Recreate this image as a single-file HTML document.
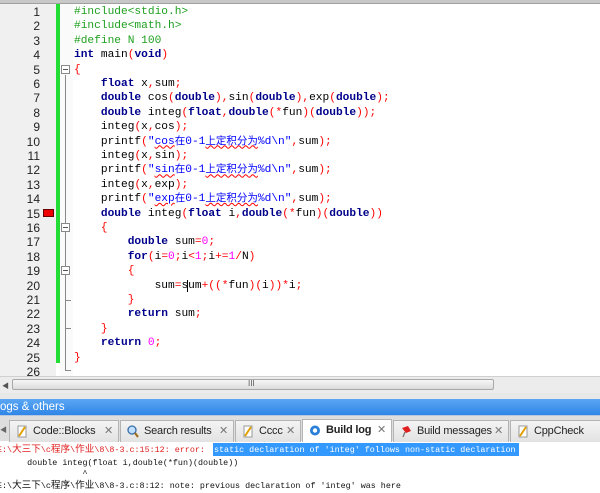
<!DOCTYPE html>
<html><head><meta charset="utf-8"><style>
*{margin:0;padding:0;box-sizing:border-box}
body{width:600px;height:493px;overflow:hidden;background:#fff;position:relative;font-family:"Liberation Sans","Noto Sans CJK SC",sans-serif}
.top{position:absolute;left:0;top:0;width:600px;height:4px;background:#c8c8c8;border-bottom:1px solid #a0a0a0}
.gut{position:absolute;left:0;top:4px;width:56px;height:372px;background:#f0f0f0}
.green{position:absolute;left:56px;top:4px;width:4px;height:359px;background:#22dd33}
.foldcol{position:absolute;left:60px;top:4px;width:13px;height:372px;background:#fafafa}
.ln{position:absolute;left:0;width:40px;text-align:right;font:12px "Liberation Sans",sans-serif;color:#222;height:14.4px;line-height:14.4px}
.code{position:absolute;left:74px;white-space:pre;font:11.2px "Liberation Mono","Noto Sans CJK SC",monospace;height:14.4px;line-height:14.4px;color:#000}
.k{color:#00008b;font-weight:bold}
.p{color:#1fa01f}
.o{color:#f00}
.s{color:#0000ff}
.n{color:#f0f}
.cj{font-size:10.5px;color:#0000ff}
.u{text-decoration:underline wavy #f00;text-decoration-thickness:1px}
.fb{position:absolute;left:61px;width:9px;height:9px;border:1px solid #888;background:#fff}
.fb:after{content:"";position:absolute;left:1px;top:3px;width:5px;height:1px;background:#555}
.vl{position:absolute;left:65px;width:1px;background:#888}
.hl{position:absolute;left:65px;width:6px;height:1px;background:#888}
.hs{position:absolute;left:0;top:376px;width:600px;height:17px;background:#ececec;border-top:1px solid #d0d0d0}
.thumb{position:absolute;left:12px;top:379px;width:482px;height:11px;border:1px solid #a8a8a8;border-radius:2px;background:linear-gradient(#f6f6f6,#dcdcdc)}
.title{position:absolute;left:0;top:399px;width:600px;height:16px;background:linear-gradient(#5aa6f4,#2f86e6);color:#fff;font-size:11.5px;line-height:16px}
.tabs{position:absolute;left:0;top:415px;width:600px;height:26px;background:#dedede;border-top:1px solid #b8c8e0}
.tab{position:absolute;top:4px;height:22px;background:linear-gradient(#f4f4f4,#e2e2e2);border:1px solid #b4b4b4;border-bottom:none;font-size:11px;letter-spacing:-0.2px;line-height:21px;color:#222;padding-left:23px}
.tab.a{background:#fff;font-weight:bold;top:3px;height:23px}
.tab i{position:absolute;right:5px;top:0;font-style:normal;color:#777;font-weight:normal}
.ic{position:absolute;left:6px;top:4px;width:12px;height:13px}
.log{position:absolute;left:-3px;white-space:pre;font:8.4px "Liberation Mono","Noto Sans CJK SC",monospace;height:12px;line-height:12px}
.c{font-size:9.6px}
</style></head><body>
<div class="top"></div>
<div class="gut"></div>
<div class="foldcol"></div>
<div class="green"></div>
<div style="position:absolute;left:43px;top:209px;width:11px;height:8px;background:#e00;border:1px solid #600"></div>

<div class="ln" style="top:5px">1</div><div class="ln" style="top:19.4px">2</div><div class="ln" style="top:33.8px">3</div><div class="ln" style="top:48.2px">4</div><div class="ln" style="top:62.6px">5</div><div class="ln" style="top:77px">6</div><div class="ln" style="top:91.4px">7</div><div class="ln" style="top:105.8px">8</div><div class="ln" style="top:120.2px">9</div><div class="ln" style="top:134.6px">10</div><div class="ln" style="top:149px">11</div><div class="ln" style="top:163.4px">12</div><div class="ln" style="top:177.8px">13</div><div class="ln" style="top:192.2px">14</div><div class="ln" style="top:206.6px">15</div><div class="ln" style="top:221px">16</div><div class="ln" style="top:235.4px">17</div><div class="ln" style="top:249.8px">18</div><div class="ln" style="top:264.2px">19</div><div class="ln" style="top:278.6px">20</div><div class="ln" style="top:293px">21</div><div class="ln" style="top:307.4px">22</div><div class="ln" style="top:321.8px">23</div><div class="ln" style="top:336.2px">24</div><div class="ln" style="top:350.6px">25</div><div class="ln" style="top:365px">26</div>

<div class="vl" style="top:75px;height:295px"></div>
<div class="fb" style="top:65px"></div>
<div class="fb" style="top:223px"></div>
<div class="fb" style="top:266px"></div>
<div class="hl" style="top:300px"></div>
<div class="hl" style="top:328px"></div>
<div class="hl" style="top:370px"></div>

<div class="code" style="top:5px"><span class="p">#include&lt;stdio.h&gt;</span></div>
<div class="code" style="top:19.4px"><span class="p">#include&lt;math.h&gt;</span></div>
<div class="code" style="top:33.8px"><span class="p">#define N 100</span></div>
<div class="code" style="top:48.2px"><span class="k">int</span> main<span class="o">(</span><span class="k">void</span><span class="o">)</span></div>
<div class="code" style="top:62.6px"><span class="o">{</span></div>
<div class="code" style="top:77px">    <span class="k">float</span> x<span class="o">,</span>sum<span class="o">;</span></div>
<div class="code" style="top:91.4px">    <span class="k">double</span> cos<span class="o">(</span><span class="k">double</span><span class="o">),</span>sin<span class="o">(</span><span class="k">double</span><span class="o">),</span>exp<span class="o">(</span><span class="k">double</span><span class="o">);</span></div>
<div class="code" style="top:105.8px">    <span class="k">double</span> integ<span class="o">(</span><span class="k">float</span><span class="o">,</span><span class="k">double</span><span class="o">(*</span>fun<span class="o">)(</span><span class="k">double</span><span class="o">));</span></div>
<div class="code" style="top:120.2px">    integ<span class="o">(</span>x<span class="o">,</span>cos<span class="o">);</span></div>
<div class="code" style="top:134.6px">    printf<span class="o">(</span><span class="s">"<span class="u">cos</span><span class="cj">在</span>0-1<span class="u cj">上定积分为</span>%d\n"</span><span class="o">,</span>sum<span class="o">);</span></div>
<div class="code" style="top:149px">    integ<span class="o">(</span>x<span class="o">,</span>sin<span class="o">);</span></div>
<div class="code" style="top:163.4px">    printf<span class="o">(</span><span class="s">"<span class="u">sin</span><span class="cj">在</span>0-1<span class="u cj">上定积分为</span>%d\n"</span><span class="o">,</span>sum<span class="o">);</span></div>
<div class="code" style="top:177.8px">    integ<span class="o">(</span>x<span class="o">,</span>exp<span class="o">);</span></div>
<div class="code" style="top:192.2px">    printf<span class="o">(</span><span class="s">"<span class="u">exp</span><span class="cj">在</span>0-1<span class="u cj">上定积分为</span>%d\n"</span><span class="o">,</span>sum<span class="o">);</span></div>
<div class="code" style="top:206.6px">    <span class="k">double</span> integ<span class="o">(</span><span class="k">float</span> i<span class="o">,</span><span class="k">double</span><span class="o">(*</span>fun<span class="o">)(</span><span class="k">double</span><span class="o">))</span></div>
<div class="code" style="top:221px">    <span class="o">{</span></div>
<div class="code" style="top:235.4px">        <span class="k">double</span> sum<span class="o">=</span><span class="n">0</span><span class="o">;</span></div>
<div class="code" style="top:249.8px">        <span class="k">for</span><span class="o">(</span>i<span class="o">=</span><span class="n">0</span><span class="o">;</span>i<span class="o">&lt;</span><span class="n">1</span><span class="o">;</span>i<span class="o">+=</span><span class="n">1</span><span class="o">/</span>N<span class="o">)</span></div>
<div class="code" style="top:264.2px">        <span class="o">{</span></div>
<div class="code" style="top:278.6px">            sum<span class="o">=</span>s<span style="border-left:1px solid #000;margin-left:-1px"></span>um<span class="o">+((*</span>fun<span class="o">)(</span>i<span class="o">))*</span>i<span class="o">;</span></div>
<div class="code" style="top:293px">        <span class="o">}</span></div>
<div class="code" style="top:307.4px">        <span class="k">return</span> sum<span class="o">;</span></div>
<div class="code" style="top:321.8px">    <span class="o">}</span></div>
<div class="code" style="top:336.2px">    <span class="k">return</span> <span class="n">0</span><span class="o">;</span></div>
<div class="code" style="top:350.6px"><span class="o">}</span></div>

<div class="hs"></div>
<div style="position:absolute;left:2px;top:381px;font-size:7px;color:#555">◀</div>
<div class="thumb"></div>
<div style="position:absolute;left:248px;top:379px;font-size:8px;color:#555">III</div>
<div style="position:absolute;left:0;top:393px;width:600px;height:6px;background:#e8e8e8"></div>

<div class="title">ogs &amp; others</div>
<div class="tabs">
<div style="position:absolute;left:0;top:9px;font-size:7px;color:#666">◀</div>
<div class="tab" style="left:9px;width:110px"><svg class="ic" viewBox="0 0 12 13"><rect x="2" y="1" width="8" height="11" fill="#fff" stroke="#999"/><path d="M3 11L9 2" stroke="#e0a000" stroke-width="2"/></svg>Code::Blocks<i>✕</i></div>
<div class="tab" style="left:120px;width:114px"><svg class="ic" viewBox="0 0 12 13"><circle cx="5" cy="5" r="4" fill="#bfe0ff" stroke="#3a6ea5" stroke-width="1.3"/><path d="M8 8L11 12" stroke="#a07020" stroke-width="2.2"/></svg>Search results<i>✕</i></div>
<div class="tab" style="left:235px;width:66px"><svg class="ic" viewBox="0 0 12 13"><rect x="2" y="1" width="8" height="11" fill="#fff" stroke="#999"/><path d="M3 11L9 2" stroke="#e0a000" stroke-width="2"/></svg>Cccc<i>✕</i></div>
<div class="tab a" style="left:302px;width:90px"><svg class="ic" viewBox="0 0 12 13"><circle cx="6" cy="6.5" r="5" fill="#2a7fd8"/><circle cx="6" cy="6.5" r="2.2" fill="#fff"/></svg>Build log<i>✕</i></div>
<div class="tab" style="left:393px;width:116px"><svg class="ic" viewBox="0 0 12 13"><path d="M2 3L8 1L11 6L6 8Z" fill="#e02020"/><path d="M5 7L3 12" stroke="#777" stroke-width="1.3"/></svg>Build messages<i>✕</i></div>
<div class="tab" style="left:510px;width:92px"><svg class="ic" viewBox="0 0 12 13"><rect x="2" y="1" width="8" height="11" fill="#fff" stroke="#999"/><path d="M3 11L9 2" stroke="#e0a000" stroke-width="2"/></svg>CppCheck</div>
</div>

<div style="position:absolute;left:213px;top:443px;width:306px;height:13px;background:#3399ff"></div>
<div class="log" style="top:444px;color:#e02020">E:\<span class="c">大三下</span>\c<span class="c">程序</span>\<span class="c">作业</span>\8\8-3.c:15:12: error:</div>
<div class="log" style="top:444px;left:214px;color:#fff">static declaration of 'integ' follows non-static declaration</div>
<div class="log" style="top:457px;color:#111">      double integ(float i,double(*fun)(double))</div>
<div class="log" style="top:468px;color:#111">                 ^</div>
<div class="log" style="top:480px;color:#111">E:\<span class="c">大三下</span>\c<span class="c">程序</span>\<span class="c">作业</span>\8\8-3.c:8:12: note: previous declaration of 'integ' was here</div>
</body></html>
